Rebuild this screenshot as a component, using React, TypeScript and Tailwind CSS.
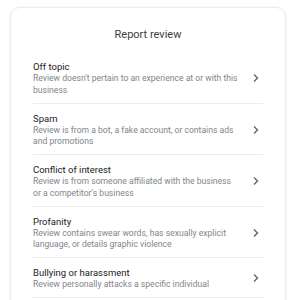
import React from "react";

const items = [
  { t: "Off topic", d: ["Review doesn't pertain to an experience at or with this", "business"] },
  { t: "Spam", d: ["Review is from a bot, a fake account, or contains ads", "and promotions"] },
  { t: "Conflict of interest", d: ["Review is from someone affiliated with the business", "or a competitor's business"] },
  { t: "Profanity", d: ["Review contains swear words, has sexually explicit", "language, or details graphic violence"] },
  { t: "Bullying or harassment", d: ["Review personally attacks a specific individual"] },
];

export default function App() {
  return (
    <div className="w-[298px] h-[300px] overflow-hidden bg-white pt-[7px] pl-[10px] pr-[12px]" style={{ fontFamily: "Roboto, 'Liberation Sans', sans-serif" }}>
      <div className="rounded-[10px] border border-[#ececec] shadow-[0_0_3px_rgba(0,0,0,0.06)] bg-white px-[22px] h-[310px]">
        <div className="h-[44px] pt-[20px] text-center leading-[14px] text-[11px] text-[#3c4043]">Report review</div>
        {items.map((it) => (
          <div key={it.t} className="flex items-center border-b border-[#ebebeb] pt-[8px] pb-[6.5px]">
            <div className="w-[210px] shrink-0">
              <div className="text-[9.5px] leading-[13px] text-[#202124]">{it.t}</div>
              {it.d.map((l) => (
                <div key={l} className="whitespace-nowrap text-[8.6px] leading-[11.5px] text-[#80868b]">{l}</div>
              ))}
            </div>
            <svg width="8" height="10" viewBox="0 0 8 10" className="ml-auto mr-[3px]">
              <path d="M2 1.5 L5.5 5 L2 8.5" fill="none" stroke="#5f6368" strokeWidth="1.4" />
            </svg>
          </div>
        ))}
      </div>
    </div>
  );
}
